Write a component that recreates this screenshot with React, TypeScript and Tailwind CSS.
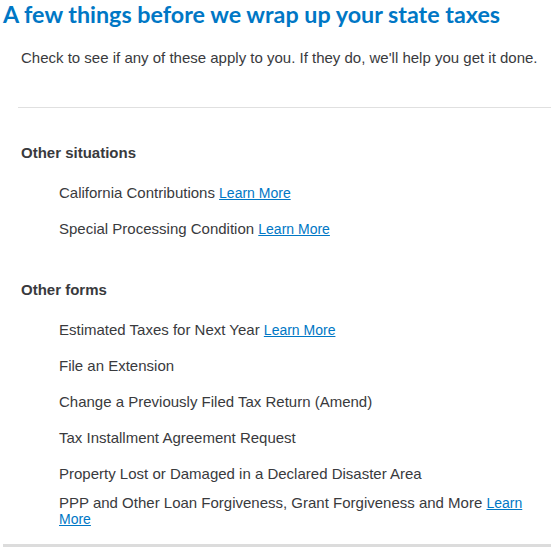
import React from "react";

const Link = () => (
  <a href="#" className="text-[#0077c5] underline text-[14px]">Learn More</a>
);

const Item = ({ children }: { children: React.ReactNode }) => (
  <div className="py-[8px] leading-[20px]">{children}</div>
);

export default function App() {
  return (
    <div className="w-[551px] h-[550px] bg-white overflow-hidden text-[#393a3d] font-['Liberation_Sans',Arial,sans-serif] text-[15px]">
      <h1 className="pl-[3px] pt-[0px] text-[23.3px] leading-[28px] font-bold text-[#0077c5] font-['Lato','Noto_Sans',sans-serif]">
        A few things before we wrap up your state taxes
      </h1>
      <p className="pl-[21px] mt-[20px] leading-[20px]">
        Check to see if any of these apply to you. If they do, we'll help you get it done.
      </p>
      <div className="ml-[18px] mt-[39px] border-t border-[#e0e0e0]" />
      <div className="pl-[21px] pt-[35px]">
        <h2 className="font-bold leading-[20px]">Other situations</h2>
        <div className="pl-[38px] mt-[12px]">
          <Item>California Contributions <Link /></Item>
          <Item>Special Processing Condition <Link /></Item>
        </div>
        <h2 className="font-bold leading-[20px] mt-[33px]">Other forms</h2>
        <div className="pl-[38px] mt-[12px]">
          <Item>Estimated Taxes for Next Year <Link /></Item>
          <Item>File an Extension</Item>
          <Item>Change a Previously Filed Tax Return (Amend)</Item>
          <Item>Tax Installment Agreement Request</Item>
          <Item>Property Lost or Damaged in a Declared Disaster Area</Item>
          <div className="leading-[16px] pr-[20px] mt-[3px]">
            PPP and Other Loan Forgiveness, Grant Forgiveness and More <Link />
          </div>
        </div>
      </div>
      <div className="ml-[3px] mt-[17px] h-[3px] bg-[#dcdcdc]" />
    </div>
  );
}
